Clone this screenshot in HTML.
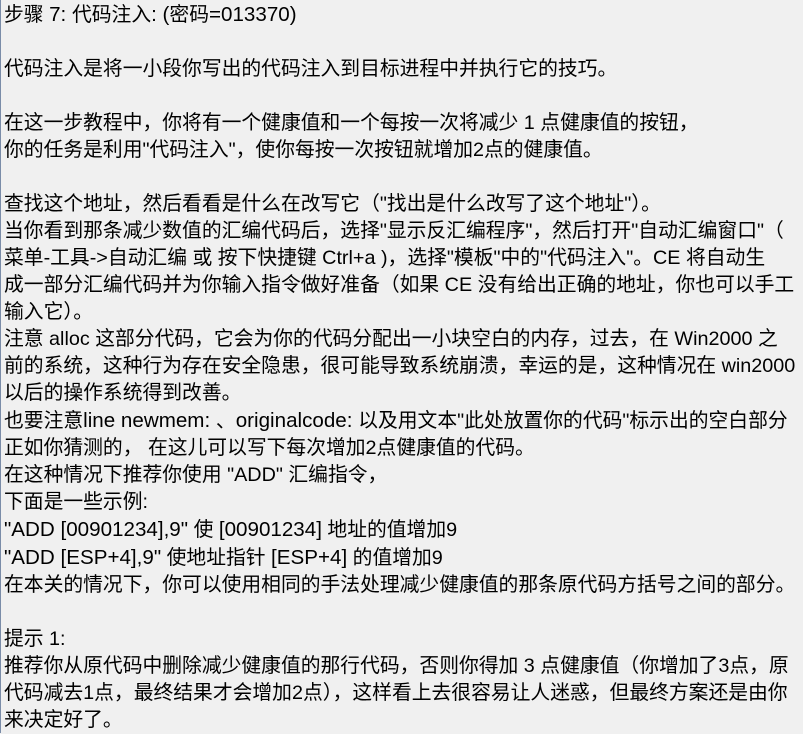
<!DOCTYPE html>
<html><head><meta charset="utf-8"><style>
html,body{margin:0;padding:0;}
body{width:803px;height:733px;overflow:hidden;background:#f0f0f0;position:relative;}
.bar{position:absolute;left:0;top:0;width:1px;height:733px;background:#7a8ca8;}
.t{position:absolute;left:4px;top:1px;font-family:"Liberation Sans","Noto Sans CJK SC",sans-serif;font-size:19.8px;line-height:27px;color:#000;white-space:pre;}
.l{font-size:20.6px;}
</style></head><body>
<div class="bar"></div>
<div class="t">步骤 <span class="l">7: </span>代码注入<span class="l">: (</span>密码<span class="l">=013370)</span>

代码注入是将一小段你写出的代码注入到目标进程中并执行它的技巧。

在这一步教程中，你将有一个健康值和一个每按一次将减少 1 点健康值的按钮，
你的任务是利用"代码注入"，使你每按一次按钮就增加2点的健康值。

查找这个地址，然后看看是什么在改写它（"找出是什么改写了这个地址"）。
当你看到那条减少数值的汇编代码后，选择"显示反汇编程序"，然后打开"自动汇编窗口"（
菜单-工具->自动汇编 或 按下快捷键 Ctrl+a )，选择"模板"中的"代码注入"。CE 将自动生
成一部分汇编代码并为你输入指令做好准备（如果 CE 没有给出正确的地址，你也可以手工
输入它）。
注意 alloc 这部分代码，它会为你的代码分配出一小块空白的内存，过去，在 Win2000 之
前的系统，这种行为存在安全隐患，很可能导致系统崩溃，幸运的是，这种情况在 win2000
以后的操作系统得到改善。
也要注意<span class="l">line newmem: </span>、<span class="l">originalcode: </span>以及用文本"此处放置你的代码"标示出的空白部分
正如你猜测的， 在这儿可以写下每次增加2点健康值的代码。
在这种情况下推荐你使用 "ADD" 汇编指令，
下面是一些示例:
<span class="l">"ADD [00901234],9"</span> 使 <span class="l">[00901234]</span> 地址的值增加9
<span class="l">"ADD [ESP+4],9"</span> 使地址指针 <span class="l">[ESP+4]</span> 的值增加9
在本关的情况下，你可以使用相同的手法处理减少健康值的那条原代码方括号之间的部分。

提示 1:
推荐你从原代码中删除减少健康值的那行代码，否则你得加 3 点健康值（你增加了3点，原
代码减去1点，最终结果才会增加2点），这样看上去很容易让人迷惑，但最终方案还是由你
来决定好了。
</div>
</body></html>
